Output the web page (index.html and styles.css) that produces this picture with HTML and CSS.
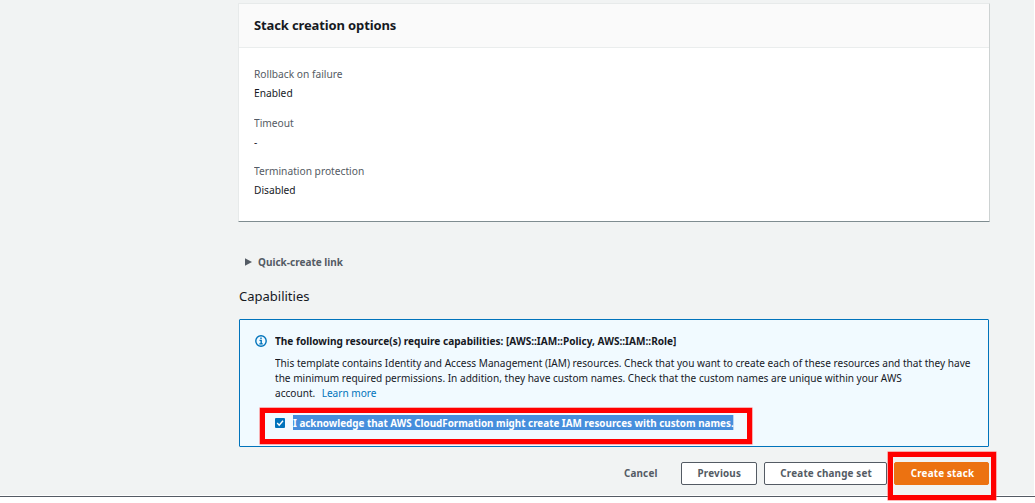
FILE: index.html
```html
<!DOCTYPE html>
<html lang="en">
<head>
<meta charset="utf-8">
<title>Create stack</title>
<link rel="stylesheet" href="styles.css">
</head>
<body>
<main class="page">
  <section class="card">
    <h2 class="card-title">Stack creation options</h2>
    <dl class="details">
      <dt>Rollback on failure</dt><dd>Enabled</dd>
      <dt>Timeout</dt><dd>-</dd>
      <dt>Termination protection</dt><dd>Disabled</dd>
    </dl>
  </section>
  <div class="expander">
    <svg class="caret" viewBox="0 0 7 8"><path d="M0 0.3 7 4 0 7.7z"/></svg>
    <span class="quick">Quick-create link</span>
  </div>
  <h3 class="section-title">Capabilities</h3>
  <section class="alert">
    <svg class="info" viewBox="0 0 12 12"><circle cx="6" cy="6" r="5.2"/><path d="M6 2.5v1.5M4.5 5.4H6.2V8.8M4.3 8.9H7.8"/></svg>
    <div class="alert-body">
      <h4 class="alert-title">The following resource(s) require capabilities: [AWS::IAM::Policy, AWS::IAM::Role]</h4>
      <p class="alert-text">This template contains Identity and Access Management (IAM) resources. Check that you want to create each of these resources and that they have<br>the minimum required permissions. In addition, they have custom names. Check that the custom names are unique within your AWS<br>account.<a class="learn">Learn more</a></p>
      <label class="ack">
        <svg class="check" viewBox="0 0 10 10"><rect width="10" height="10" rx="1"/><path d="M2.2 5.1 4.2 7.2 8 2.8"/></svg>
        <span class="selected">I acknowledge that AWS CloudFormation might create IAM resources with custom names.</span>
        <i class="mark mark-ack"></i>
      </label>
    </div>
  </section>
  <div class="actions">
    <span class="btn link"><span class="label">Cancel</span></span>
    <span class="btn previous"><span class="label">Previous</span></span>
    <span class="btn change"><span class="label">Create change set</span></span>
    <span class="btn primary"><span class="label">Create stack</span><i class="mark mark-create"></i></span>
  </div>
</main>
<footer class="footer"></footer>
</body>
</html>
```
FILE: styles.css
```css
* { box-sizing: border-box; }
body { margin: 0; width: 1035px; height: 503px; overflow: hidden; background: #fff; color: #16191f; font: 11px/15px "Noto Sans", sans-serif; white-space: nowrap; }
h2, h3, h4, p, dl, dd { margin: 0; }
.page { width: 1034px; height: 495px; padding: 3px 45px 0 239px; background: #f1f3f3; }
.card { width: 752px; height: 219px; margin-left: -1px; background: #fff; border: 1px solid #e7eaea; border-right-color: #cdd2d2; border-bottom-color: #7f8c90; border-radius: 1px; }
.card-title { height: 44px; padding-left: 15px; background: #fafafa; border-bottom: 1px solid #eaeded; font-size: 13px; line-height: 43px; font-weight: 700; letter-spacing: -0.13px; }
.details { padding: 18px 15px; }
.details dt, .details dd { transform: scaleX(.928); transform-origin: left; }
.details dt { height: 19px; color: #545b64; }
.details dd { height: 30px; }
.details dd + dt { margin-top: -0.5px; }
.expander { display: flex; align-items: center; height: 15px; margin: 32px 0 0 6px; color: #545b64; font-weight: 700; }
.caret { width: 7px; height: 8px; margin-right: 6px; fill: #545b64; }
.quick { transform: scaleX(.91); transform-origin: left; }
.section-title { margin-top: 17px; height: 20px; font-size: 13px; line-height: 20px; font-weight: 400; }
.alert { display: flex; height: 128px; margin-top: 13px; padding: 13px 0 0 15px; background: #f1faff; border: 1px solid #0073bb; border-radius: 1px; }
.info { flex: none; width: 12px; height: 12px; margin: 2px 8px 0 0; fill: none; stroke: #0073bb; stroke-width: 1.4; }
.alert-body { width: 700px; }
.alert-title, .alert-text { width: max-content; transform: scaleX(.9165); transform-origin: left; }
.alert-title { height: 22px; font-size: 11px; font-weight: 700; }
.learn { color: #0073bb; margin-left: 7px; }
.ack { position: relative; display: flex; align-items: center; height: 15px; margin-top: 15px; font-weight: 700; }
.check { flex: none; width: 10px; height: 10px; margin-right: 8px; fill: #0073bb; }
.check path { fill: none; stroke: #fff; stroke-width: 1.4; }
.selected { background: #468edc; color: #fff; transform: scaleX(.895); transform-origin: left; }
.mark { position: absolute; border: 5px solid #f00; box-shadow: 0 0 0 .5px #ff6666; }
.mark-ack { left: -15px; top: -7px; width: 492px; height: 36px; }
.actions { display: flex; justify-content: flex-end; margin-top: 15px; }
.btn { position: relative; display: flex; align-items: center; justify-content: center; height: 23px; padding: 0 0 2px 1px; border: 1px solid #545b64; border-radius: 2px; background: #fff; color: #545b64; font-weight: 700; }
.label { letter-spacing: .2px; transform: scaleX(.895); }
.link { width: 66px; margin-right: 8px; border-color: transparent; background: none; }
.previous { width: 76px; margin-right: 7px; }
.change { width: 123px; margin-right: 7px; }
.primary { width: 95px; background: #ec7211; border-color: #ec7211; color: #fff; }
.mark-create { left: -7px; top: -11px; width: 108px; height: 48px; }
.footer { height: 2px; border-bottom: 1px solid #545b64; }
```
